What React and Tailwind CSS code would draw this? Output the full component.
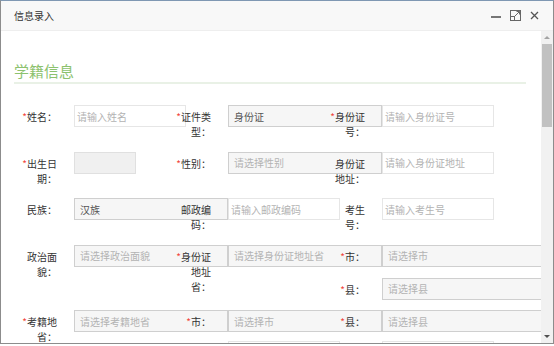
import React from 'react'

const kinds = {
  text: 'w-[112px] bg-white border-[#e6e6e6] pl-[2px]',
  select: 'w-[154px] bg-[#f6f6f6] border-[#cfcfcf] pl-[5px]',
  wide: 'w-[162px] bg-[#f6f6f6] border-[#cfcfcf] pl-[5px]',
  date: 'w-[62px] bg-[#f0f0f0] border-[#e0e0e0] pl-[5px]',
}

const Field = ({ label, req, kind = 'text', value, ph }) => (
  <div className="flex items-start">
    <div className="w-[35px] ml-[2px] mr-[17px] shrink-0 text-right pt-[4px] pb-[2px] leading-[15px] text-[#333]">
      {req && <span className="text-[#f2443a]">*</span>}
      {label}
    </div>
    <div className={`h-[22px] border shrink-0 flex items-center whitespace-nowrap overflow-hidden ${kinds[kind]}`}>
      {value ? <span className="text-[#555]">{value}</span> : <span className="text-[#b3b3b3]">{ph}</span>}
    </div>
  </div>
)

const Row = ({ children }) => (
  <div className="grid grid-cols-[154px_154px_154px] items-start">{children}</div>
)

export default function App() {
  return (
    <div className="w-[554px] h-[346px] bg-white overflow-hidden font-['Noto_Sans_CJK_SC',sans-serif] text-[10px]">
      <div className="h-[344px] border-l border-r border-b border-t border-[#8c8c8c] border-t-[#7f98b3] flex flex-col">
        {/* title bar */}
        <div className="h-[30px] shrink-0 bg-[#f8f8f8] border-b border-[#eee] flex items-center justify-between pl-[13px] pr-[14px]">
          <span className="text-[#333] text-[10px]">信息录入</span>
          <div className="flex items-center gap-[9px]">
            <svg width="10" height="10" viewBox="0 0 10 10">
              <line x1="0" y1="6" x2="10" y2="6" stroke="#555" strokeWidth="1.6" />
            </svg>
            <svg width="11" height="11" viewBox="0 0 11 11" fill="none" stroke="#666" strokeWidth="1">
              <rect x="0.5" y="0.5" width="10" height="10" />
              <rect x="0.5" y="6.5" width="4" height="4" />
              <line x1="4.5" y1="6.5" x2="9.5" y2="1.5" />
              <polyline points="6.5,1.5 9.5,1.5 9.5,4.5" />
            </svg>
            <svg width="9" height="9" viewBox="0 0 9 9">
              <path d="M1 1 L8 8 M8 1 L1 8" stroke="#555" strokeWidth="1.3" />
            </svg>
          </div>
        </div>

        <div className="flex flex-1 min-h-0">
          {/* content */}
          <div className="flex-1 overflow-hidden pt-[30px]">
            <div className="ml-[13px] w-[512px] border-b-2 border-[#e9f1e6] pb-[1px]">
              <div className="h-[20px] leading-[20px] text-[15px] text-[#8cc26e]">学籍信息</div>
            </div>

            <div className="ml-[19px] mt-[21px] flex flex-col gap-[10.5px]">
              <Row>
                <Field req label="姓名：" ph="请输入姓名" />
                <Field req label="证件类型：" kind="select" value="身份证" />
                <Field req label="身份证号：" ph="请输入身份证号" />
              </Row>
              <Row>
                <Field req label="出生日期：" kind="date" />
                <Field req label="性别：" kind="select" ph="请选择性别" />
                <Field label="身份证地址：" ph="请输入身份证地址" />
              </Row>
              <Row>
                <Field label="民族：" kind="select" value="汉族" />
                <Field label="邮政编码：" ph="请输入邮政编码" />
                <Field label="考生号：" ph="请输入考生号" />
              </Row>
              <Row>
                <Field label="政治面貌：" kind="select" ph="请选择政治面貌" />
                <Field req label="身份证地址省：" kind="select" ph="请选择身份证地址省" />
                <div className="flex flex-col gap-[11px]">
                  <Field req label="市：" kind="wide" ph="请选择市" />
                  <Field req label="县：" kind="wide" ph="请选择县" />
                </div>
              </Row>
              <Row>
                <Field req label="考籍地省：" kind="select" ph="请选择考籍地省" />
                <div className="flex flex-col gap-[9px]">
                  <Field req label="市：" kind="select" ph="请选择市" />
                  <Field label="" ph="" />
                </div>
                <div className="flex flex-col gap-[9px]">
                  <Field req label="县：" kind="wide" ph="请选择县" />
                  <Field label="" ph="" />
                </div>
              </Row>
            </div>
          </div>

          {/* scrollbar */}
          <div className="w-[12px] shrink-0 bg-[#f1f1f1] flex flex-col items-center">
            <div className="h-[13px] flex items-center justify-center">
              <div className="w-0 h-0 border-l-[3px] border-r-[3px] border-b-[3px] border-l-transparent border-r-transparent border-b-[#a3a3a3]" />
            </div>
            <div className="w-[10px] h-[83px] bg-[#c1c1c1]" />
            <div className="flex-1" />
            <div className="h-[13px] flex items-center justify-center">
              <div className="w-0 h-0 border-l-[3px] border-r-[3px] border-t-[3px] border-l-transparent border-r-transparent border-t-[#505050]" />
            </div>
          </div>
        </div>
      </div>
    </div>
  )
}
